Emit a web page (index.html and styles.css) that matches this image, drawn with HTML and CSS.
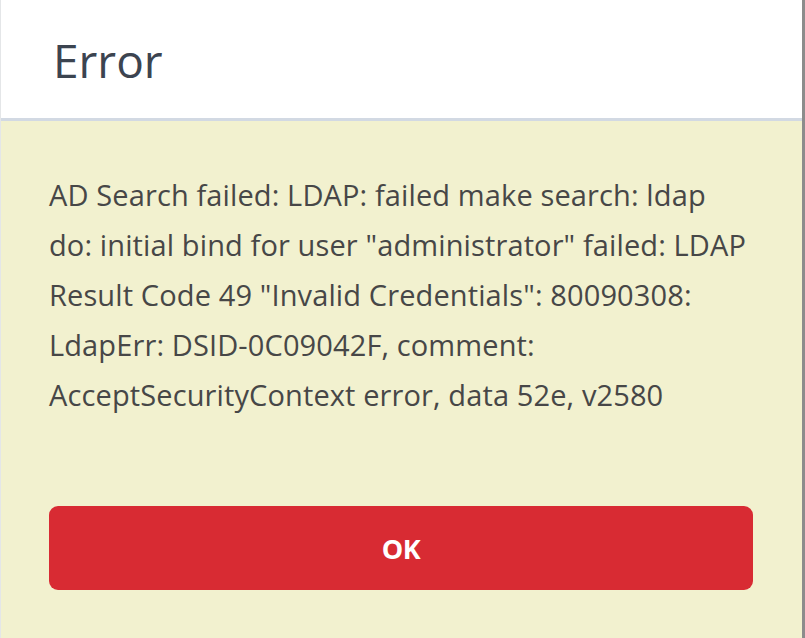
FILE: index.html
```html
<!DOCTYPE html>
<html>
<head>
<meta charset="utf-8">
<link rel="stylesheet" href="styles.css">
</head>
<body>
<div class="dialog">
  <div class="dialog-header">
    <h1 class="dialog-title">Error</h1>
  </div>
  <div class="dialog-body">
    <p class="dialog-message">AD Search failed: LDAP: failed make search: ldap do: initial bind for user "administrator" failed: LDAP Result Code 49 "Invalid Credentials": 80090308: LdapErr: DSID-0C09042F, comment: AcceptSecurityContext error, data 52e, v2580</p>
    <button class="btn-ok" type="button">OK</button>
  </div>
</div>
</body>
</html>
```
FILE: styles.css
```css
html, body {
  margin: 0;
  padding: 0;
  height: 100%;
}
body {
  font-family: "Open Sans", "DejaVu Sans", sans-serif;
  background: #f2f1cf;
}
.dialog {
  height: 638px;
  box-sizing: border-box;
  border-left: 1px solid #e4e6e8;
  border-right: 3px solid #8c8c8c;
  display: flex;
  flex-direction: column;
}
.dialog-header {
  background: #ffffff;
  height: 118px;
  border-bottom: 3px solid #d2d9e3;
  display: flex;
  align-items: center;
  padding-left: 52px;
}
.dialog-title {
  margin: 0;
  font-weight: 400;
  font-size: 46px;
  line-height: 1;
  color: #3c4450;
  position: relative;
  top: 1px;
}
.dialog-body {
  flex: 1;
  padding: 49px 49px 0 48px;
  display: flex;
  flex-direction: column;
}
.dialog-message {
  margin: 0;
  font-size: 29px;
  letter-spacing: 0.12px;
  line-height: 50px;
  color: #474747;
}
.btn-ok {
  margin-top: 86px;
  height: 84px;
  border: 0;
  border-radius: 9px;
  background: #d82b33;
  color: #ffffff;
  font-family: "Open Sans", "DejaVu Sans", sans-serif;
  font-weight: 700;
  font-size: 27px;
  letter-spacing: -0.5px;
}
```
